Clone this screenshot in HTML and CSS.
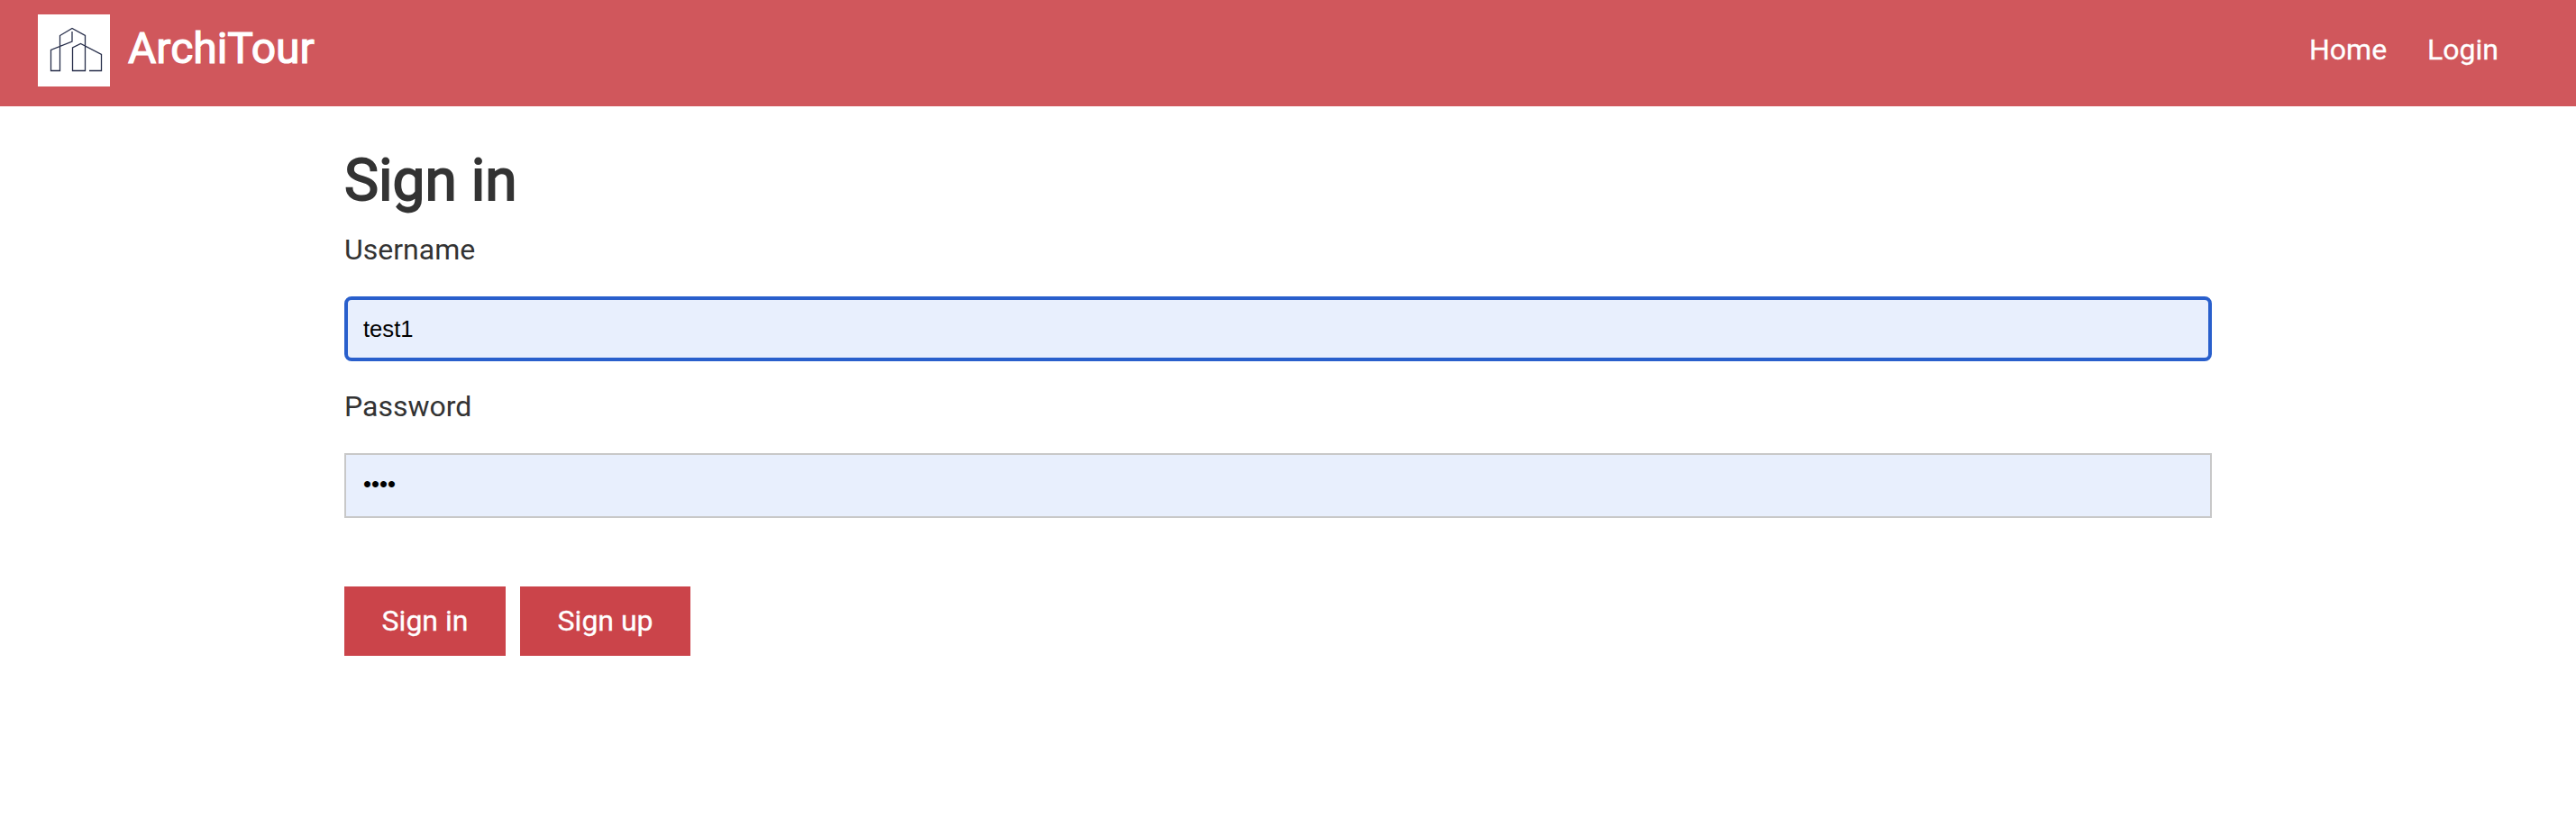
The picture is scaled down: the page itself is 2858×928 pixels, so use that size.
FILE: index.html
```html
<!DOCTYPE html>
<html lang="en">
<head>
<meta charset="utf-8">
<title>ArchiTour</title>
<link rel="stylesheet" href="styles.css">
</head>
<body>
<header class="header">
  <a class="brand">
    <svg class="logo" viewBox="0 0 80 80" fill="none" stroke="#272e4a" stroke-width="1.3">
      <path d="M38 19V30L14.500 39.500V62.500H24.500V23.500L38 15.500L52.500 23.500V62.500H38.500V37L47.500 32.500L70.500 44.500V62.500H57"/>
    </svg>
    <span class="brand-name">ArchiTour</span>
  </a>
  <nav class="nav"><a>Home</a><a>Login</a></nav>
</header>
<main class="content">
  <h1 class="title">Sign in</h1>
  <form class="form">
    <label class="label" for="username">Username</label>
    <input class="input input-active" id="username" type="text" value="test1">
    <label class="label" for="password">Password</label>
    <div class="input" id="password">••••</div>
    <div class="actions">
      <button class="button" type="button">Sign in</button>
      <button class="button" type="button">Sign up</button>
    </div>
  </form>
</main>
</body>
</html>
```
FILE: styles.css
```css
* { box-sizing: border-box; }
body {
  margin: 0;
  background: #fff;
  color: #333;
  font: 32px/40px Roboto, sans-serif;
}
.header {
  display: flex;
  justify-content: space-between;
  align-items: flex-start;
  height: 118px;
  padding: 16px 86px 0 42px;
  background: #d0575c;
  color: #fff;
}
.brand { display: flex; gap: 20px; }
.logo { width: 80px; height: 80px; background: #fff; }
.brand-name {
  padding-top: 8px;
  font-size: 48px;
  line-height: 60px;
  -webkit-text-stroke: 1.2px currentColor;
}
.nav {
  display: flex;
  gap: 45px;
  padding-top: 19px;
  -webkit-text-stroke: 0.3px currentColor;
}
.content { width: 2072px; margin-left: 382px; padding-top: 43px; }
.title {
  margin: 0;
  font-size: 64px;
  line-height: 80px;
  font-weight: 400;
  -webkit-text-stroke: 1.8px currentColor;
}
.form { display: flex; flex-direction: column; }
.label { margin: 16px 0 32px; }
.input {
  width: 100%;
  height: 72px;
  margin-bottom: 14px;
  padding: 0 19px;
  border: 2px solid #c8c8c8;
  background: #e8effd;
  color: #000;
  font: 25.6px/65px "Liberation Sans", Arial, sans-serif;
}
.input-active {
  padding: 0 17px;
  border: 4px solid #295fcc;
  border-radius: 8px;
  outline: none;
}
.actions { display: flex; gap: 16px; margin-top: 62px; }
.button {
  height: 77px;
  padding: 0 41.6px 2px;
  border: 0;
  background: #cb444a;
  color: #fff;
  font: 32px/40px Roboto, sans-serif;
  -webkit-text-stroke: 0.3px currentColor;
}
```
